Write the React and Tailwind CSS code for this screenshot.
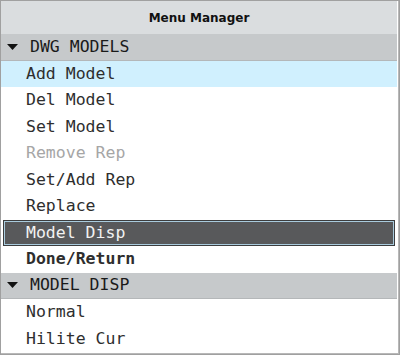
import React from 'react';

const mono = { fontFamily: '"DejaVu Sans Mono", "Liberation Mono", monospace' };

const Header = ({ label }) => (
  <div className="flex h-[26.5px] items-center border-b border-[#b4b7b9] bg-[#c6c9cb] pl-[6px]">
    <svg width="11" height="6" viewBox="0 0 11 6" className="mr-[12px]">
      <polygon points="0,0 11,0 5.5,6" fill="#111" />
    </svg>
    <span className="text-[16.5px] leading-none text-[#1a1a1a]" style={mono}>{label}</span>
  </div>
);

const Item = ({ label, state }) => {
  let cls = 'text-[#2e2e2e]';
  if (state === 'hover') cls = 'bg-[#d0f0fe] text-[#2e2e2e]';
  if (state === 'disabled') cls = 'text-[#a6a6a6]';
  if (state === 'bold') cls = 'font-bold text-[#2e2e2e]';
  if (state === 'active') {
    return (
      <div className="mx-[2px] flex h-[26.5px] items-center border border-[#3c3d3e] bg-[#58595b]">
        <div className="flex h-full w-full items-center border border-[#a9cbdd] pl-[21px] text-[16.5px] leading-none text-[#f2f2f2]" style={mono}>
          {label}
        </div>
      </div>
    );
  }
  return (
    <div className={`flex h-[26.5px] items-center pl-[25px] text-[16.5px] leading-none ${cls}`} style={mono}>
      {label}
    </div>
  );
};

export default function App() {
  return (
    <div className="h-[355px] w-[400px] border border-[#a0a0a0] bg-[#e8e8e8]">
      <div className="h-full w-full border-r border-b border-[#b8b8b8] bg-white pr-px pb-px">
        <div className="flex h-[33px] items-center justify-center bg-[#dadddf]">
          <span className="text-[12px] font-bold text-[#111]" style={{ fontFamily: '"DejaVu Sans", "Noto Sans", sans-serif' }}>
            Menu Manager
          </span>
        </div>
        <Header label="DWG MODELS" />
        <Item label="Add Model" state="hover" />
        <Item label="Del Model" />
        <Item label="Set Model" />
        <Item label="Remove Rep" state="disabled" />
        <Item label="Set/Add Rep" />
        <Item label="Replace" />
        <Item label="Model Disp" state="active" />
        <Item label="Done/Return" state="bold" />
        <Header label="MODEL DISP" />
        <Item label="Normal" />
        <Item label="Hilite Cur" />
      </div>
    </div>
  );
}
